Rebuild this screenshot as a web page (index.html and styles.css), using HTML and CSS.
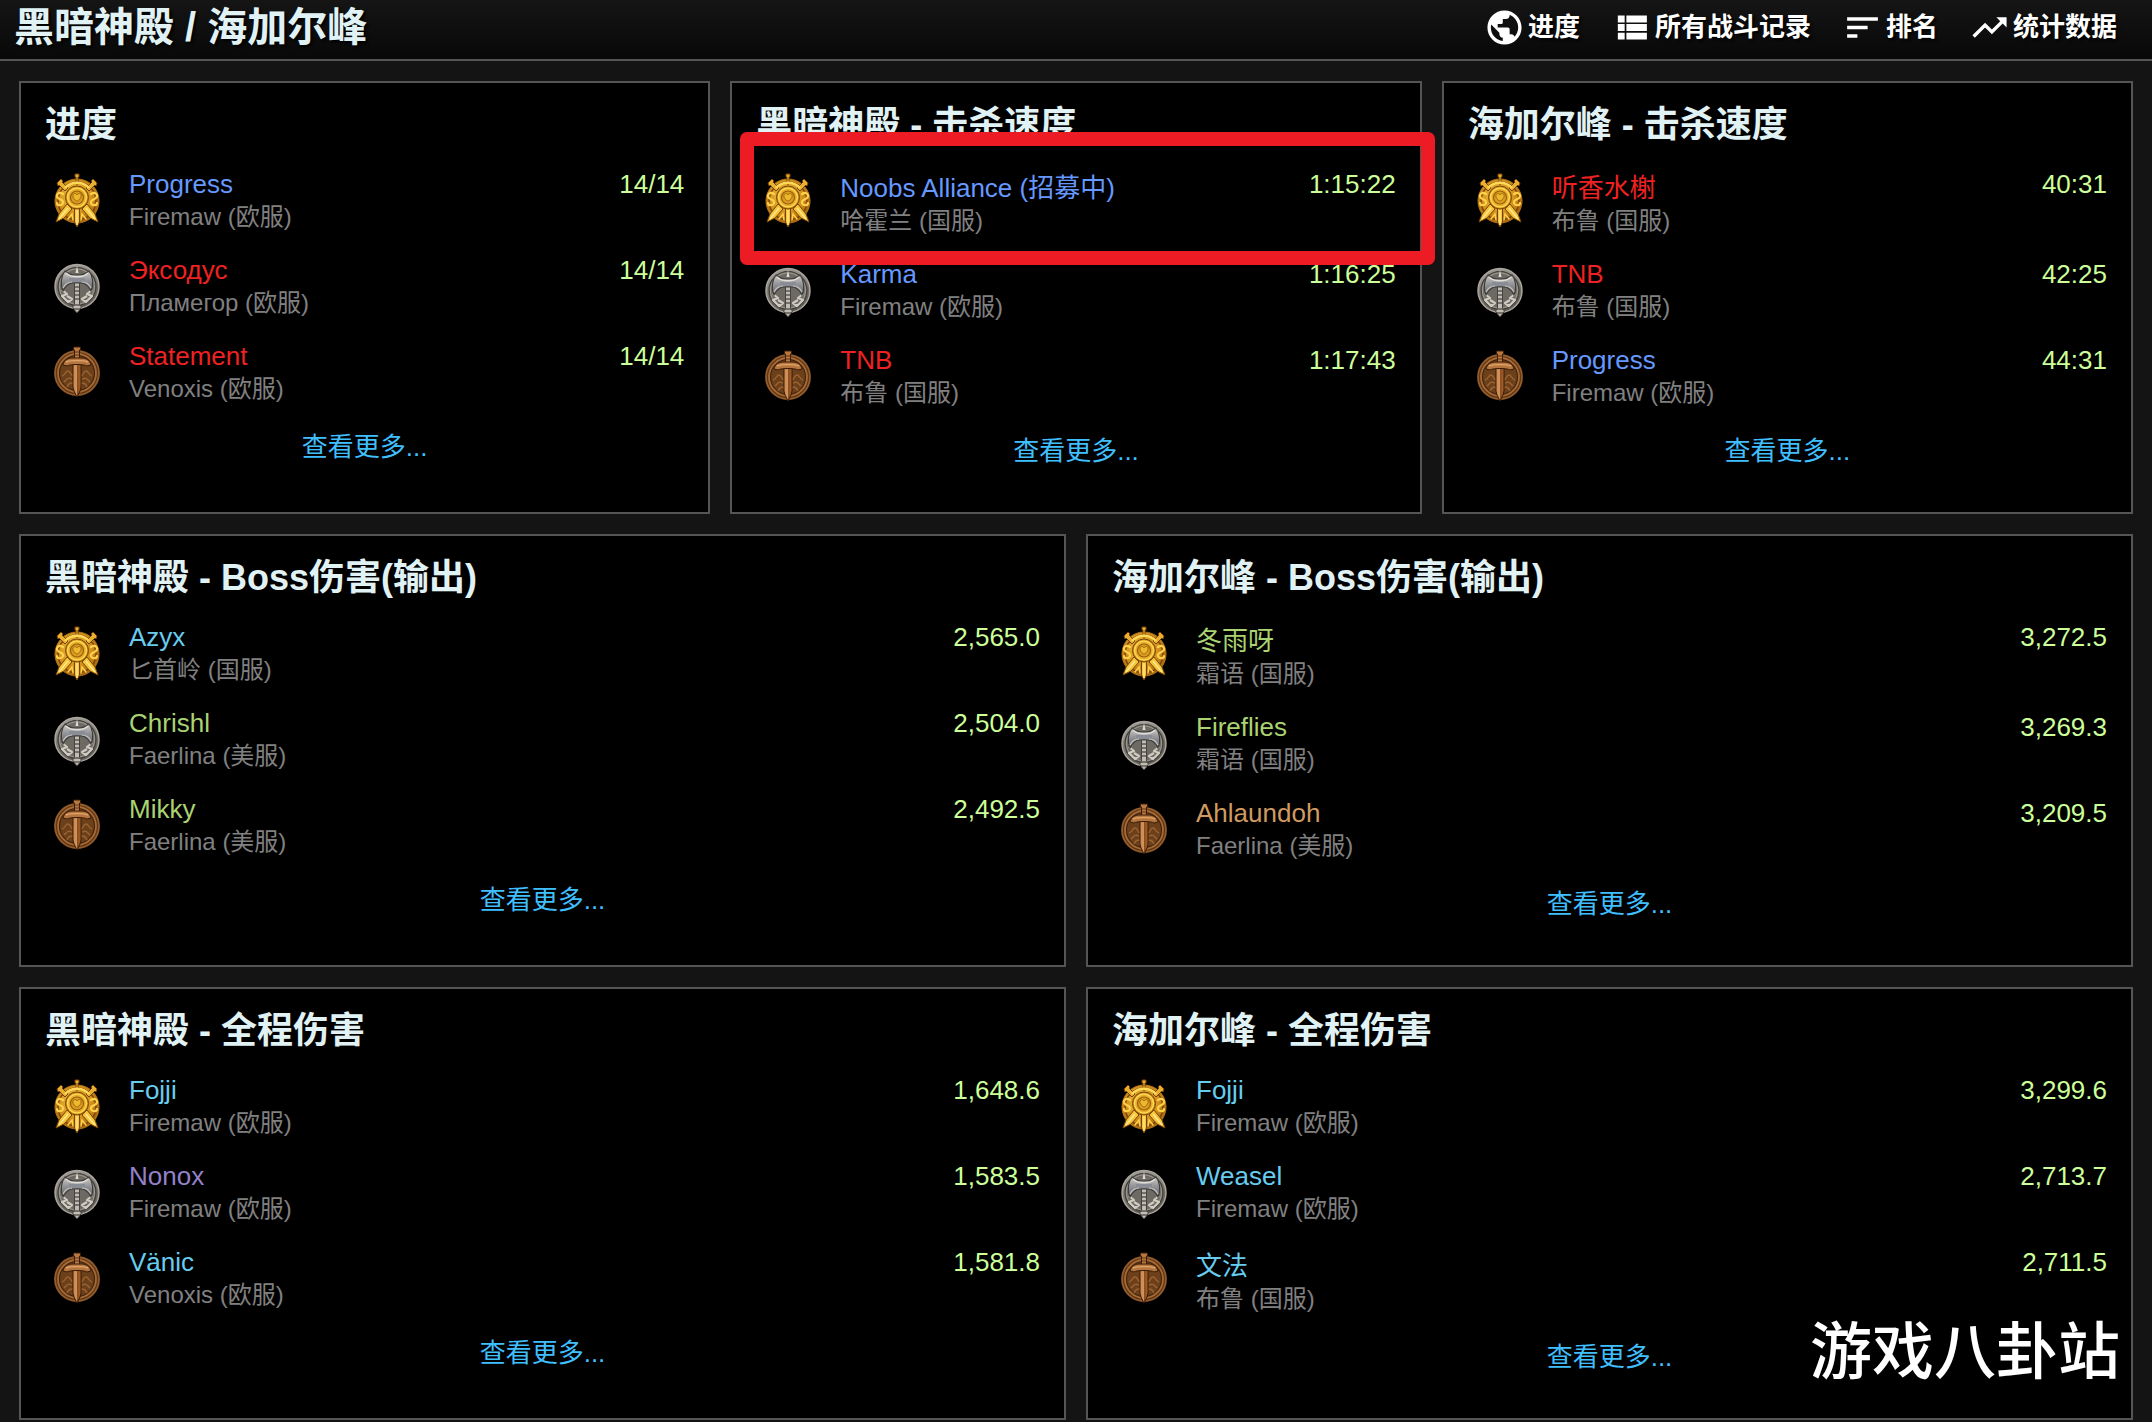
FILE: index.html
```
<!DOCTYPE html>
<html lang="zh-CN">
<head>
    <meta charset="UTF-8">
    <meta name="viewport" content="width=device-width, initial-scale=1.0">
    <title>黑暗神殿 / 海加尔峰</title>
    <link rel="stylesheet" href="styles.css">
</head>
<body>
    <!-- medal artwork, reused by every ranking row -->
    <svg class="sprite" aria-hidden="true">
        <defs>
            <radialGradient id="goldFill" cx="45%" cy="40%" r="65%">
                <stop offset="0" stop-color="#f8d048"/>
                <stop offset="0.6" stop-color="#d08e1c"/>
                <stop offset="1" stop-color="#9a5a0c"/>
            </radialGradient>
            <linearGradient id="silverFill" x1="0" y1="0" x2="0.3" y2="1">
                <stop offset="0" stop-color="#a5a39d"/>
                <stop offset="1" stop-color="#5e5a54"/>
            </linearGradient>
            <linearGradient id="axeFill" x1="0" y1="0" x2="0" y2="1">
                <stop offset="0" stop-color="#cfcdc8"/>
                <stop offset="0.5" stop-color="#8f9094"/>
                <stop offset="1" stop-color="#66666a"/>
            </linearGradient>
            <linearGradient id="bladeFill" x1="0" y1="0" x2="1" y2="0">
                <stop offset="0" stop-color="#c98a50"/>
                <stop offset="0.5" stop-color="#d2925a"/>
                <stop offset="0.55" stop-color="#8a4e20"/>
                <stop offset="1" stop-color="#a8642c"/>
            </linearGradient>
        </defs>
        <symbol id="gold" viewBox="0 0 56 56">
            <circle cx="28" cy="28" r="22" fill="url(#goldFill)" stroke="#b87818"/>
            <circle cx="28" cy="28" r="19" fill="none" stroke="#7c4608" stroke-width="1.500"/>
            <g fill="#e8b030" stroke="#7a4206" stroke-width="1">
                <path d="M26 1h4v3h-1v7h-2V4h-1z"/>
                <path d="M8 10l4-4 2 2-1 1 6 6-3 3-6-6-1 1zM48 10l-4-4-2 2 1 1-6 6 3 3 6-6 1 1z"/>
            </g>
            <g fill="none" stroke="#ffd24a" stroke-width="2.200" stroke-linecap="round">
                <path d="M14 21c-4-3-8 1-5 4 2 2 6 2 5 5s-6 3-6 0"/>
                <path d="M42 21c4-3 8 1 5 4-2 2-6 2-5 5s6 3 6 0"/>
                <path d="M19 46l4-5 1 6M37 46l-4-5-1 6" stroke-width="1.500"/>
            </g>
            <g fill="#f6c63a" stroke="#7a4206" stroke-width="1">
                <path d="M18 31l5 5-8 9-8 4 3-8zM38 31l-5 5 8 9 8 4-3-8z"/>
                <path d="M25.500 35h5v14L28 54l-2.500-5z"/>
            </g>
            <path d="M28 37v15M19 35l-9 11M37 35l9 11" stroke="#ffeb98" stroke-width="1.200"/>
            <path d="M16 15c6-7 18-7 24 0" fill="none" stroke="#ffd858" stroke-width="2.500"/>
            <circle cx="28" cy="24.500" r="11.500" fill="#c88a1c" stroke="#7a4606" stroke-width="1"/>
            <circle cx="28" cy="24.500" r="9.500" fill="#e6ae2c" stroke="#ffd850" stroke-width="1.500"/>
            <circle cx="28" cy="24.500" r="6.500" fill="#d89c20" stroke="#9a5e0c" stroke-width="1.200"/>
            <path d="M24 22c1-2 3-2 4 0 1-2 4-2 4 0 1 3-3 6-4 6s-5-3-4-6z" fill="#ecb82e" stroke="#a4660e"/>
        </symbol>
        <symbol id="silver" viewBox="0 0 56 56">
            <circle cx="28" cy="27.500" r="22" fill="url(#silverFill)" stroke="#aaa69d" stroke-width="1.500"/>
            <circle cx="28" cy="27.500" r="19" fill="#6d6963" stroke="#403d38" stroke-width="1.200"/>
            <circle cx="28" cy="27.500" r="17.500" fill="none" stroke="#9a978f" stroke-width="1.200"/>
            <g fill="none" stroke="#d0ccc2" stroke-width="2.200" stroke-linejoin="round">
                <path d="M13 31l5 4-5 2 6 6 4-3-5-3M43 31l-5 4 5 2-6 6-4-3 5-3"/>
            </g>
            <path d="M26.500 14l1.500-7 1.500 7z" fill="#dedbd2"/>
            <path d="M16 12c3 3 6 4 10 4h4c4 0 7-1 10-4 4 5 5 13 2 20-2-4-6-8-10-8h-8c-4 0-8 4-10 8-3-7-2-15 2-20z" fill="url(#axeFill)" stroke="#3f3d3a" stroke-width="1.200"/>
            <path d="M17 14c5 5 17 5 22 0" fill="none" stroke="#e0ded8" stroke-width="1.500"/>
            <path d="M20 19h16v4H20z" fill="#8b8d96"/>
            <path d="M14 29c2-4 5-6 9-6M42 29c-2-4-5-6-9-6" fill="none" stroke="#c4c3c0" stroke-width="1.200"/>
            <path d="M25.500 24h5v22l2 2-2 3-2.500 3-2.500-3-2-3 2-2z" fill="#c0bdb4" stroke="#45423d"/>
            <path d="M26 28h4M26 32h4M26 36h4M26 40h4M25 46h6M25 50h6" stroke="#5c5852" stroke-width="1.500"/>
        </symbol>
        <symbol id="bronze" viewBox="0 0 56 56">
            <circle cx="28" cy="28" r="22" fill="#5f3614" stroke="#935c2c" stroke-width="1.800"/>
            <circle cx="28" cy="28" r="19" fill="#6c401a" stroke="#a66a36" stroke-width="1.800"/>
            <circle cx="28" cy="28" r="17.500" fill="none" stroke="#3e210c"/>
            <g fill="none" stroke="#9a6230" stroke-width="1.500">
                <path d="M13 31c4-1 3-5 6-5s2 4 5 5M15 37c3-3 4-5 8-3M18 42c2-4 3-4 6-4"/>
                <path d="M43 31c-4-1-3-5-6-5s-2 4-5 5M41 37c-3-3-4-5-8-3M38 42c-2-4-3-4-6-4"/>
            </g>
            <path d="M24.500 2h7v3h-1v9h-5V5h-1z" fill="#b87840" stroke="#3a1c08"/>
            <path d="M26 7h4M26 10h4" stroke="#613312"/>
            <path d="M24 19h8v23l-1 4-3 6-3-6-1-4z" fill="url(#bladeFill)" stroke="#3a1c08"/>
            <path d="M14 20c1-5 5-7 10-7h8c5 0 9 2 10 7l-4 1c-3-2-17-2-20 0z" fill="#b5753e" stroke="#3a1c08"/>
            <path d="M17 17c4-2 18-2 22 0" stroke="#dda268" stroke-width="1.500" fill="none"/>
        </symbol>
    </svg>

    <header class="topbar">
        <h1>黑暗神殿 / 海加尔峰</h1>
        <nav class="menu">
            <a href="#progress">
                <svg viewBox="0 0 24 24"><path d="M12 2C6.480 2 2 6.480 2 12s4.480 10 10 10 10-4.480 10-10S17.520 2 12 2zm-1 17.930c-3.950-.49-7-3.850-7-7.930 0-.62.08-1.210.21-1.790L9 15v1c0 1.100.9 2 2 2v1.930zm6.900-2.540c-.26-.81-1-1.390-1.900-1.390h-1v-3c0-.55-.45-1-1-1H8v-2h2c.55 0 1-.45 1-1V7h2c1.100 0 2-.9 2-2v-.41c2.930 1.190 5 4.060 5 7.410 0 2.080-.8 3.970-2.100 5.390z"/></svg>
                进度
            </a>
            <a href="#reports">
                <svg viewBox="0 0 24 24"><path d="M4 14h4v-4H4v4zm0 5h4v-4H4v4zM4 9h4V5H4v4zm5 5h12v-4H9v4zm0 5h12v-4H9v4zM9 5v4h12V5H9z"/></svg>
                所有战斗记录
            </a>
            <a href="#rankings">
                <svg viewBox="0 0 24 24"><path d="M3 18h6v-2H3v2zM3 6v2h18V6H3zm0 7h12v-2H3v2z"/></svg>
                排名
            </a>
            <a href="#statistics">
                <svg viewBox="0 0 24 24"><path d="M16 6l2.290 2.290-4.880 4.880-4-4L2 16.590 3.410 18l6-6 4 4 6.300-6.290L22 12V6z"/></svg>
                统计数据
            </a>
        </nav>
    </header>

    <main>
        <div class="row three">
            <section class="card" id="progress">
                <h2>进度</h2>
                <table>
                    <tr>
                        <td class="medal"><svg><use href="#gold"/></svg></td>
                        <td><a href="#" class="name alliance">Progress</a><span class="server">Firemaw (欧服)</span></td>
                        <td class="score">14/14</td>
                    </tr>
                    <tr>
                        <td class="medal"><svg><use href="#silver"/></svg></td>
                        <td><a href="#" class="name horde">Эксодус</a><span class="server">Пламегор (欧服)</span></td>
                        <td class="score">14/14</td>
                    </tr>
                    <tr>
                        <td class="medal"><svg><use href="#bronze"/></svg></td>
                        <td><a href="#" class="name horde">Statement</a><span class="server">Venoxis (欧服)</span></td>
                        <td class="score">14/14</td>
                    </tr>
                </table>
                <a href="#" class="more">查看更多...</a>
            </section>

            <section class="card">
                <h2>黑暗神殿 - 击杀速度</h2>
                <table>
                    <tr>
                        <td class="medal"><svg><use href="#gold"/></svg></td>
                        <td><a href="#" class="name cn alliance">Noobs Alliance (招募中)</a><span class="server">哈霍兰 (国服)</span></td>
                        <td class="score">1:15:22</td>
                    </tr>
                    <tr>
                        <td class="medal"><svg><use href="#silver"/></svg></td>
                        <td><a href="#" class="name alliance">Karma</a><span class="server">Firemaw (欧服)</span></td>
                        <td class="score">1:16:25</td>
                    </tr>
                    <tr>
                        <td class="medal"><svg><use href="#bronze"/></svg></td>
                        <td><a href="#" class="name horde">TNB</a><span class="server">布鲁 (国服)</span></td>
                        <td class="score">1:17:43</td>
                    </tr>
                </table>
                <a href="#" class="more">查看更多...</a>
                <div class="highlight"></div>
            </section>

            <section class="card">
                <h2>海加尔峰 - 击杀速度</h2>
                <table>
                    <tr>
                        <td class="medal"><svg><use href="#gold"/></svg></td>
                        <td><a href="#" class="name cn horde">听香水榭</a><span class="server">布鲁 (国服)</span></td>
                        <td class="score">40:31</td>
                    </tr>
                    <tr>
                        <td class="medal"><svg><use href="#silver"/></svg></td>
                        <td><a href="#" class="name horde">TNB</a><span class="server">布鲁 (国服)</span></td>
                        <td class="score">42:25</td>
                    </tr>
                    <tr>
                        <td class="medal"><svg><use href="#bronze"/></svg></td>
                        <td><a href="#" class="name alliance">Progress</a><span class="server">Firemaw (欧服)</span></td>
                        <td class="score">44:31</td>
                    </tr>
                </table>
                <a href="#" class="more">查看更多...</a>
            </section>
        </div>

        <div class="row">
            <section class="card" id="rankings">
                <h2>黑暗神殿 - Boss伤害(输出)</h2>
                <table>
                    <tr>
                        <td class="medal"><svg><use href="#gold"/></svg></td>
                        <td><a href="#" class="name mage">Azyx</a><span class="server">匕首岭 (国服)</span></td>
                        <td class="score">2,565.0</td>
                    </tr>
                    <tr>
                        <td class="medal"><svg><use href="#silver"/></svg></td>
                        <td><a href="#" class="name hunter">Chrishl</a><span class="server">Faerlina (美服)</span></td>
                        <td class="score">2,504.0</td>
                    </tr>
                    <tr>
                        <td class="medal"><svg><use href="#bronze"/></svg></td>
                        <td><a href="#" class="name hunter">Mikky</a><span class="server">Faerlina (美服)</span></td>
                        <td class="score">2,492.5</td>
                    </tr>
                </table>
                <a href="#" class="more">查看更多...</a>
            </section>

            <section class="card">
                <h2>海加尔峰 - Boss伤害(输出)</h2>
                <table>
                    <tr>
                        <td class="medal"><svg><use href="#gold"/></svg></td>
                        <td><a href="#" class="name cn hunter">冬雨呀</a><span class="server">霜语 (国服)</span></td>
                        <td class="score">3,272.5</td>
                    </tr>
                    <tr>
                        <td class="medal"><svg><use href="#silver"/></svg></td>
                        <td><a href="#" class="name hunter">Fireflies</a><span class="server">霜语 (国服)</span></td>
                        <td class="score">3,269.3</td>
                    </tr>
                    <tr>
                        <td class="medal"><svg><use href="#bronze"/></svg></td>
                        <td><a href="#" class="name warrior">Ahlaundoh</a><span class="server">Faerlina (美服)</span></td>
                        <td class="score">3,209.5</td>
                    </tr>
                </table>
                <a href="#" class="more">查看更多...</a>
            </section>
        </div>

        <div class="row">
            <section class="card" id="statistics">
                <h2>黑暗神殿 - 全程伤害</h2>
                <table>
                    <tr>
                        <td class="medal"><svg><use href="#gold"/></svg></td>
                        <td><a href="#" class="name mage">Fojji</a><span class="server">Firemaw (欧服)</span></td>
                        <td class="score">1,648.6</td>
                    </tr>
                    <tr>
                        <td class="medal"><svg><use href="#silver"/></svg></td>
                        <td><a href="#" class="name warlock">Nonox</a><span class="server">Firemaw (欧服)</span></td>
                        <td class="score">1,583.5</td>
                    </tr>
                    <tr>
                        <td class="medal"><svg><use href="#bronze"/></svg></td>
                        <td><a href="#" class="name mage">Vänic</a><span class="server">Venoxis (欧服)</span></td>
                        <td class="score">1,581.8</td>
                    </tr>
                </table>
                <a href="#" class="more">查看更多...</a>
            </section>

            <section class="card">
                <h2>海加尔峰 - 全程伤害</h2>
                <table>
                    <tr>
                        <td class="medal"><svg><use href="#gold"/></svg></td>
                        <td><a href="#" class="name mage">Fojji</a><span class="server">Firemaw (欧服)</span></td>
                        <td class="score">3,299.6</td>
                    </tr>
                    <tr>
                        <td class="medal"><svg><use href="#silver"/></svg></td>
                        <td><a href="#" class="name mage">Weasel</a><span class="server">Firemaw (欧服)</span></td>
                        <td class="score">2,713.7</td>
                    </tr>
                    <tr>
                        <td class="medal"><svg><use href="#bronze"/></svg></td>
                        <td><a href="#" class="name cn mage">文法</a><span class="server">布鲁 (国服)</span></td>
                        <td class="score">2,711.5</td>
                    </tr>
                </table>
                <a href="#" class="more">查看更多...</a>
            </section>
        </div>
    </main>

    <div class="watermark">游戏八卦站</div>
</body>
</html>
```
FILE: styles.css
```
* {
    box-sizing: border-box;
}

body {
    margin: 0;
    background: #141414;
    color: #e1f2f5;
    font-family: Arial, "Liberation Sans", "Noto Sans CJK SC", sans-serif;
    font-size: 26px;
    line-height: 30px;
}

a {
    text-decoration: none;
}

.sprite {
    position: absolute;
    width: 0;
    height: 0;
}

.topbar {
    display: flex;
    justify-content: space-between;
    align-items: center;
    padding: 0 35px 5px 14px;
    background: linear-gradient(#151515, #080808);
    border-bottom: 2px solid #555;
    text-shadow: 2px 2px 3px #000;
}

.topbar h1 {
    margin: 0;
    font-size: 40px;
    line-height: 54px;
}

.menu {
    display: flex;
    gap: 31px;
}

.menu a {
    display: flex;
    align-items: center;
    gap: 3px;
    color: #fff;
    font-weight: bold;
}

.menu svg {
    width: 41px;
    height: 41px;
    fill: #fff;
}

main {
    padding: 20px 19px 0;
}

.row {
    display: grid;
    grid-template-columns: repeat(2, 1fr);
    gap: 20px;
    margin-bottom: 20px;
}

.row.three {
    grid-template-columns: repeat(3, 1fr);
}

.row:last-child {
    margin-bottom: 0;
}

.card {
    position: relative;
    padding: 17px 24px 46px;
    background: #000;
    border: 2px solid #555;
}

.card h2 {
    margin: 0 0 8px;
    font-size: 36px;
    line-height: 50px;
}

.card table {
    width: 100%;
    border-collapse: collapse;
}

.card td {
    padding: 11px 0 9px;
    vertical-align: top;
}

.card .medal {
    width: 84px;
    padding: 15px 0 0 4px;
}

.medal svg {
    display: block;
    width: 56px;
    height: 56px;
}

.name,
.server {
    display: block;
}

/* Chinese names sit a little lower than latin ones */
.name.cn {
    padding-top: 4px;
}

.server {
    color: #808080;
    font-size: 24px;
    line-height: 36px;
}

.card .score {
    color: #cf9;
    text-align: right;
}

.alliance {
    color: #69f;
}

.horde {
    color: #e22;
}

.mage {
    color: #68ccef;
}

.hunter {
    color: #aad372;
}

.warlock {
    color: #9482c9;
}

.warrior {
    color: #d09a60;
}

.more {
    display: block;
    margin-top: 16px;
    color: #40bfff;
    text-align: center;
}

/* marker frame around the first kill speed entry */
.highlight {
    position: absolute;
    top: 49px;
    left: 8px;
    right: -15px;
    height: 133px;
    border: 14px solid #ed1c24;
    border-radius: 7px;
    z-index: 1;
}

.watermark {
    position: fixed;
    right: 32px;
    bottom: 29px;
    color: #fff;
    font-size: 62px;
    font-weight: 500;
    line-height: 80px;
}
```
